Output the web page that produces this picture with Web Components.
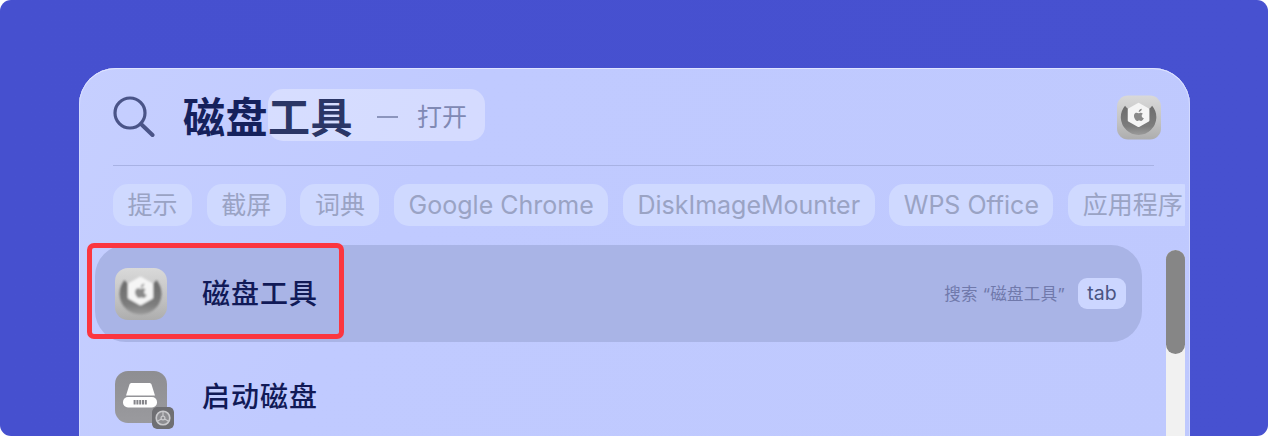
<!DOCTYPE html>
<html lang="zh"><head><meta charset="utf-8"><title>磁盘工具</title>
<style>
html,body{margin:0;padding:0;background:#fff;overflow:hidden;height:436px}
body{font-family:"Inter","Noto Sans CJK SC",sans-serif}
</style></head><body>
<spot-stage>
  <spot-panel>
    <search-bar slot="search" hint="打开"></search-bar>
    <chip-row slot="chips">
      <spot-chip>提示</spot-chip><spot-chip>截屏</spot-chip><spot-chip>词典</spot-chip>
      <spot-chip>Google Chrome</spot-chip><spot-chip>DiskImageMounter</spot-chip>
      <spot-chip>WPS Office</spot-chip><spot-chip>应用程序</spot-chip>
    </chip-row>
    <result-row slot="results" selected label="磁盘工具" icon="utility"><span slot="aside">搜索 “磁盘工具”</span></result-row>
    <result-row slot="results" label="启动磁盘" icon="disk"></result-row>
    <annot-box slot="results"></annot-box>
  </spot-panel>
</spot-stage>
<script>
const ICONS = {
utility:`<svg viewBox="0 0 52 52" width="100%" height="100%" style="display:block">
<defs><linearGradient id="u" x1="0" y1="0" x2="0" y2="1"><stop offset="0" stop-color="#d9d9d9"/><stop offset=".6" stop-color="#c2c2c2"/><stop offset="1" stop-color="#adadad"/></linearGradient>
<linearGradient id="c" x1="0" y1="0" x2="0" y2="1"><stop offset="0" stop-color="#6c6c6c"/><stop offset=".7" stop-color="#7c7c7c"/><stop offset="1" stop-color="#9a9a9a"/></linearGradient>
<filter id="b" x="-10%" y="-10%" width="120%" height="120%"><feGaussianBlur stdDeviation=".8"/></filter></defs>
<rect width="52" height="52" rx="13" fill="url(#u)"/>
<g filter="url(#b)">
<path d="M9.5 12A21 21 0 1 0 41.5 12C38 17 33 19 25.5 19C18 19 13 17 9.5 12Z" fill="url(#c)"/>
<path d="M25.5 10L37 16.5V29.5L25.5 36L14 29.5V16.5Z" fill="#f5f5f5" stroke="#f5f5f5" stroke-width="2.6" stroke-linejoin="round"/>
<g transform="translate(25.5 23) scale(.85) translate(-26 -25.5)"><path d="M29.4 19.7c-.9 1-2 1.7-3.1 1.6-.2-1.2.4-2.3 1.1-3 .8-.9 2-1.5 3-1.6.1 1.2-.3 2.2-1 3ZM33.4 29.8c-.8 1.9-2.2 4-3.6 4-1.2 0-1.5-.7-2.9-.7s-1.8.7-2.9.7c-1.3 0-2.3-1.5-3-2.6-1.6-2.5-1.8-5.4-.8-7 .7-1.1 1.9-1.8 3-1.8s1.9.7 2.9.7 1.5-.7 3-.7c1 0 2 .5 2.8 1.5-2.4 1.4-2 4.8.5 5.9Z" fill="#8a8a8a"/></g>
</g></svg>`,
disk:`<svg viewBox="0 0 52 52" width="100%" height="100%" style="display:block">
<defs><linearGradient id="d" x1="0" y1="0" x2="0" y2="1"><stop offset="0" stop-color="#8e8e92"/><stop offset="1" stop-color="#9a9a9e"/></linearGradient>
<filter id="b2" x="-10%" y="-10%" width="120%" height="120%"><feGaussianBlur stdDeviation=".35"/></filter></defs>
<rect width="52" height="52" rx="13" fill="url(#d)"/>
<g filter="url(#b2)">
<path d="M14.5 13.5C15 12.5 15.6 12 16.6 12H34.4C35.4 12 36 12.5 36.5 13.5L40 24.5H11Z" fill="#fff"/>
<rect x="8" y="26" width="34" height="10.5" rx="5" fill="#fff"/>
<g fill="#85858a"><rect x="18.6" y="29" width="2" height="4.5"/><rect x="21.4" y="29" width="2" height="4.5"/><rect x="24.2" y="29" width="2" height="4.5"/><rect x="27" y="29" width="2" height="4.5"/><rect x="29.8" y="29" width="2" height="4.5"/></g>
</g></svg>`,
badge:`<svg viewBox="0 0 24 24" width="100%" height="100%" style="display:block">
<rect width="24" height="24" rx="5" fill="#6f6f73"/>
<circle cx="12" cy="12" r="7.4" fill="#8d8d91" stroke="#c9c9cc" stroke-width="1.8"/>
<circle cx="12" cy="12" r="2.1" fill="none" stroke="#c9c9cc" stroke-width="1.3"/>
<path d="M12 9.9V4.8M10.2 13 5.8 15.6M13.8 13l4.4 2.6" stroke="#c9c9cc" stroke-width="1.3"/>
</svg>`};

function def(name, css, html){
  customElements.define(name, class extends HTMLElement{
    constructor(){super();this.attachShadow({mode:"open"});}
    connectedCallback(){
      const h = typeof html==="function"?html(this):html;
      this.shadowRoot.innerHTML = `<style>${css}</style>${h}`;
    }
  });
}

def("spot-stage",`:host{display:block;width:1268px;height:436px;box-sizing:border-box;padding:68px 78px 0 79px;
  background:linear-gradient(90deg,#4650cf,#4751d0);border-radius:11px;overflow:hidden}`,`<slot></slot>`);

def("spot-panel",`:host{display:block;position:relative;height:420px;box-sizing:border-box;border-radius:37px;overflow:hidden;
  background:linear-gradient(120deg,#c6cfff 0,#c0caff 30%,#bfc9fe 100%);box-shadow:inset 0 1px 0 #dfe4ff,inset 1px 0 0 #d3daff,inset -1px 0 0 #d3daff}
  .wrap{display:flex;flex-direction:column}
  `,`<div class="wrap"><slot name="search"></slot><slot name="chips"></slot>
  <slot name="results"></slot></div><scroll-rail></scroll-rail>`);

def("search-bar",`:host{display:flex;align-items:center;height:98px;box-sizing:border-box;margin:0 36px 0 34px;border-bottom:1px solid #a8b2e4;color:#15215c}
  svg.mag{width:42px;height:42px;flex:none}
  .q{position:relative;z-index:1;font:700 42px/52px "Noto Sans CJK SC",sans-serif;letter-spacing:.5px;margin-left:28px;white-space:nowrap;margin-top:-3px;flex:none;width:169px}
  .q span{color:#2b3666}
  .pill{display:flex;align-items:center;height:52px;width:217px;box-sizing:border-box;margin-left:-84px;border-radius:15px;background:rgba(255,255,255,.33);padding-left:109px;color:#8089b4;font:400 25px/52px "Noto Sans CJK SC",sans-serif;margin-top:-3px;flex:none}
  .dash{width:21px;height:2px;background:#8c95bd;margin-right:19px;margin-top:3px;flex:none}
  .end{margin-left:auto;margin-right:-7px;width:44px;height:45px;flex:none;margin-top:2px}`,
  el=>`<svg class="mag" viewBox="0 0 42 42"><circle cx="17" cy="17" r="15" fill="none" stroke="#4a5488" stroke-width="3.2"/><path d="M28 28 39.5 39" stroke="#4a5488" stroke-width="4" stroke-linecap="round"/></svg>
  <span class="q">磁盘<span>工具</span></span>
  <span class="pill"><span class="dash"></span>${el.getAttribute("hint")}</span>
  <span class="end">${ICONS.utility}</span>`);

def("chip-row",`:host{display:flex;gap:14.7px;margin:18px 5px 0 34px;height:42px;overflow:hidden;flex:none}`,`<slot></slot>`);
def("spot-chip",`:host{display:block;flex:none;height:42px;box-sizing:border-box;padding:0 14.5px;border-radius:15px;background:#cfd9ff;color:#9aa3c4;font:400 25px/42px "Inter","Noto Sans CJK SC",sans-serif;white-space:nowrap}`,`<slot></slot>`);

def("result-row",`:host{display:flex;align-items:center;box-sizing:border-box;height:97px;width:1047px;margin-left:16px;border-radius:31px;padding:0 16px 0 20px;color:#111a57}
  :host([selected]){background:#a9b4e6;margin-top:19px}
  :host(:not([selected])){margin-top:6px}
  .ic{width:52px;height:52px;flex:none;position:relative}
  .sub{position:absolute;left:37px;top:36px;width:22px;height:22px;border-radius:5px;overflow:hidden}
  .t{font:500 28px/40px "Noto Sans CJK SC",sans-serif;letter-spacing:1px;margin-left:35px;margin-top:-4px;white-space:nowrap}
  .aside{margin-left:auto;font:400 16.5px/20px "Inter","Noto Sans CJK SC",sans-serif;letter-spacing:.3px;color:#7079ab;white-space:nowrap}
  .tab{margin-left:13px;width:48px;height:31px;border-radius:9px;background:#ccd6ff;color:#4a5482;font:400 19.5px/31px "Inter",sans-serif;text-align:center}`,
  el=>{const sel=el.hasAttribute("selected");const ic=el.getAttribute("icon");
  return `<span class="ic">${ICONS[ic]}${ic==="disk"?`<span class="sub">${ICONS.badge}</span>`:""}</span>
  <span class="t">${el.getAttribute("label")}</span>
  ${sel?`<span class="aside"><slot name="aside"></slot></span><span class="tab">tab</span>`:""}`});

def("scroll-rail",`:host{display:block;position:absolute;left:1087px;top:182px;bottom:0;width:19px;background:#f1f1f1;border-radius:10px 10px 0 0}
  .thumb{height:104px;background:#868686;border-radius:10px}`,`<div class="thumb"></div>`);

def("annot-box",`:host{display:block;position:absolute;left:8px;top:175px;width:257px;height:96px;box-sizing:border-box;border:5px solid #fb3640;border-radius:7px}`,``);
</script>
</body></html>
